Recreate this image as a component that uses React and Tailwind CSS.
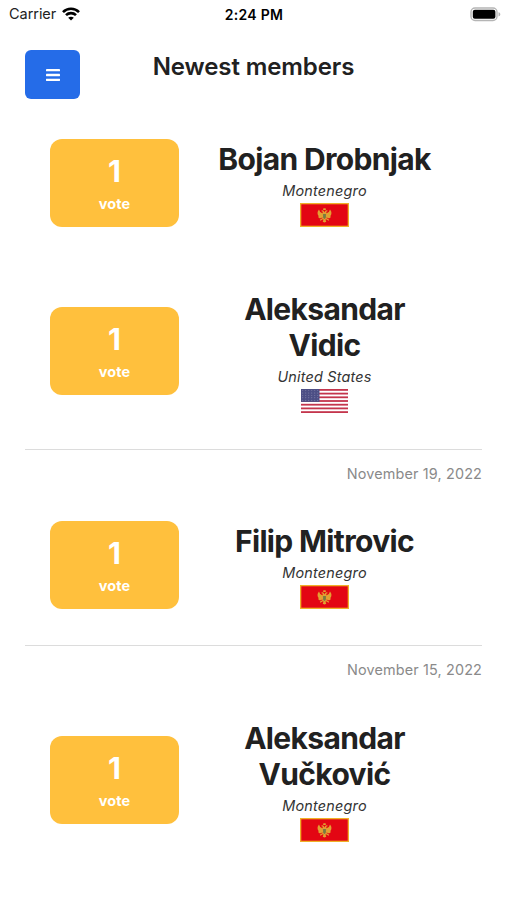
import clsx from 'clsx';

const members = [
  { id: 1, name: 'Bojan Drobnjak', country: 'Montenegro', votes: 1, spacing: 'mt-10' },
  { id: 2, name: 'Aleksandar Vidic', country: 'United States', votes: 1, spacing: 'mt-[61.5px]' },
  { id: 3, name: 'Filip Mitrovic', country: 'Montenegro', votes: 1, date: 'November 19, 2022', spacing: 'mt-[37px]' },
  { id: 4, name: 'Aleksandar Vučković', country: 'Montenegro', votes: 1, date: 'November 15, 2022', spacing: 'mt-[38px]' },
];

const WifiIcon = () => (
  <svg className="w-[18px] h-[14px]" viewBox="0 0 18 14" fill="none" stroke="#000" strokeWidth="2.6">
    <path d="M1 5.1C5.4 .6 12.6 .6 17 5.1" />
    <path d="M4 8.2c2.8-2.8 7.2-2.8 10 0" />
    <path d="M9 13.6 6.2 10.8c1.5-1.5 4.1-1.5 5.6 0z" fill="#000" stroke="none" />
  </svg>
);

const BatteryIcon = () => (
  <svg className="w-[31px] h-[15px]" viewBox="0 0 31 15">
    <rect x="1" y="1" width="26" height="12.5" rx="4" fill="#fff" stroke="#b5b5b5" strokeWidth="1.4" />
    <rect x="2.8" y="2.8" width="22.6" height="8.9" rx="2" fill="#000" />
    <path d="M28.5 5.3c2.4.6 2.4 3.6 0 4.2z" fill="#b5b5b5" />
  </svg>
);

const MontenegroFlag = () => (
  <svg className="w-[49px] h-6" viewBox="0 0 49 24">
    <rect width="49" height="24" fill="#f0b028" />
    <rect x="1.3" y="1.3" width="46.4" height="21.4" fill="#e30613" />
    <g fill="#e2a032">
      {/* crown and heads */}
      <path d="M23.4 5.2h2.2l.3 1.7h-2.8z" />
      <path d="M24.5 9.4c-.7-2-2.2-2.6-3.4-1.5l1.4.6.4 2.5h3.2l.4-2.5 1.4-.6c-1.2-1.1-2.7-.5-3.4 1.5z" />
      {/* wings */}
      <path d="M22.8 10.5 20.2 9l-1.2-2.6c-2 2.2-2 5 .1 7.1l-1.2.1c.5 1.3 1.6 1.9 2.9 1.7l2.3-1.2z" />
      <path d="m26.2 10.5 2.6-1.5L30 6.4c2 2.2 2 5-.1 7.1l1.2.1c-.5 1.3-1.6 1.9-2.9 1.7l-2.3-1.2z" />
      {/* body and tail */}
      <path d="M22.3 10h4.4v5.2l-1.2 1.5.8 2.1-1.8.8-1.8-.8.8-2.1-1.2-1.5z" />
      <path d="m22.5 15-2.7 1.8.6 1 2.9-1.7zM26.5 15l2.7 1.8-.6 1-2.9-1.7z" />
    </g>
    <path d="M23.1 11h2.8v3c0 1.1-.7 1.8-1.4 2.1-.7-.3-1.4-1-1.4-2.1z" fill="#777b42" />
  </svg>
);

const UsaFlag = () => (
  <svg className="w-[47px] h-6" viewBox="0 0 47 24">
    <rect width="47" height="24" fill="#fff" />
    {[0, 1, 2, 3, 4, 5, 6].map((i) => (
      <rect key={i} y={i * 3.7} width="47" height="1.8" fill="#c4354c" />
    ))}
    <rect width="18.5" height="12.9" fill="#4c4f85" />
    {[0, 1, 2, 3, 4].map((row) =>
      [0, 1, 2, 3, 4, 5].map((col) => (
        <circle key={`${row}-${col}`} cx={1.8 + col * 3} cy={1.6 + row * 2.4} r="0.45" fill="#a9aac6" />
      ))
    )}
  </svg>
);

const StatusBar = () => (
  <div className="grid grid-cols-3 items-center h-[27px] pl-[9px] pr-[6px] text-black">
    <div className="flex items-center gap-[6px]">
      <span className="text-[14.5px] leading-7 text-[#222] tracking-[-0.05px]">Carrier</span>
      <WifiIcon />
    </div>
    <span className="-ml-[2px] text-center text-[14px] font-semibold tracking-[0.3px]">2:24 PM</span>
    <div className="flex justify-end">
      <BatteryIcon />
    </div>
  </div>
);

const Header = () => (
  <header className="grid grid-cols-[55px_1fr_55px] px-[25px] pt-[23px]">
    <button className="flex items-center justify-center h-[49px] rounded-md bg-[#256ce8]" aria-label="Menu">
      <svg className="w-[14px] h-3" viewBox="0 0 14 12" fill="#fff">
        <rect width="14" height="2.3" rx=".4" />
        <rect y="4.85" width="14" height="2.3" rx=".4" />
        <rect y="9.7" width="14" height="2.3" rx=".4" />
      </svg>
    </button>
    <h1 className="text-center text-2xl leading-[34px] font-semibold tracking-[-0.1px] whitespace-nowrap">Newest members</h1>
  </header>
);

function MemberRow({ member }) {
  const { name, country, votes } = member;

  return (
    <div className={clsx('flex items-center gap-7 pl-[25px]', member.spacing)}>
      <div className="flex flex-col items-center w-[129px] h-[88px] pt-[14px] rounded-xl bg-[#ffc03d] text-white font-bold shrink-0">
        <span className="text-[30px] leading-9">{votes}</span>
        <span className="mt-[5px] text-[14.5px] leading-5 tracking-[0.1px]">vote</span>
      </div>
      <div className="flex flex-col items-center w-[235px] pt-[2px] text-center">
        <h2 className="text-[30px] leading-9 font-bold tracking-[-0.65px]">{name}</h2>
        <p className="mt-[5px] mb-[3px] text-[14.4px] leading-[18px] italic tracking-[0.2px] text-[#333]">{country}</p>
        {country === 'Montenegro' ? <MontenegroFlag /> : <UsaFlag />}
      </div>
    </div>
  );
}

export default function App() {
  return (
    <div className="w-full h-[900px] overflow-hidden bg-white text-[#212121] font-[Inter,sans-serif]">
      <StatusBar />
      <Header />
      <main className="px-[25px]">
        {members.map((member) => (
          <section key={member.id}>
            {member.date && (
              <div className="mt-9 pt-[14px] border-t border-[#dcdcdc] text-right">
                <time className="block text-[14.4px] leading-5 tracking-[0.15px] text-[#8a8a8a]">{member.date}</time>
              </div>
            )}
            <MemberRow member={member} />
          </section>
        ))}
      </main>
    </div>
  );
}
